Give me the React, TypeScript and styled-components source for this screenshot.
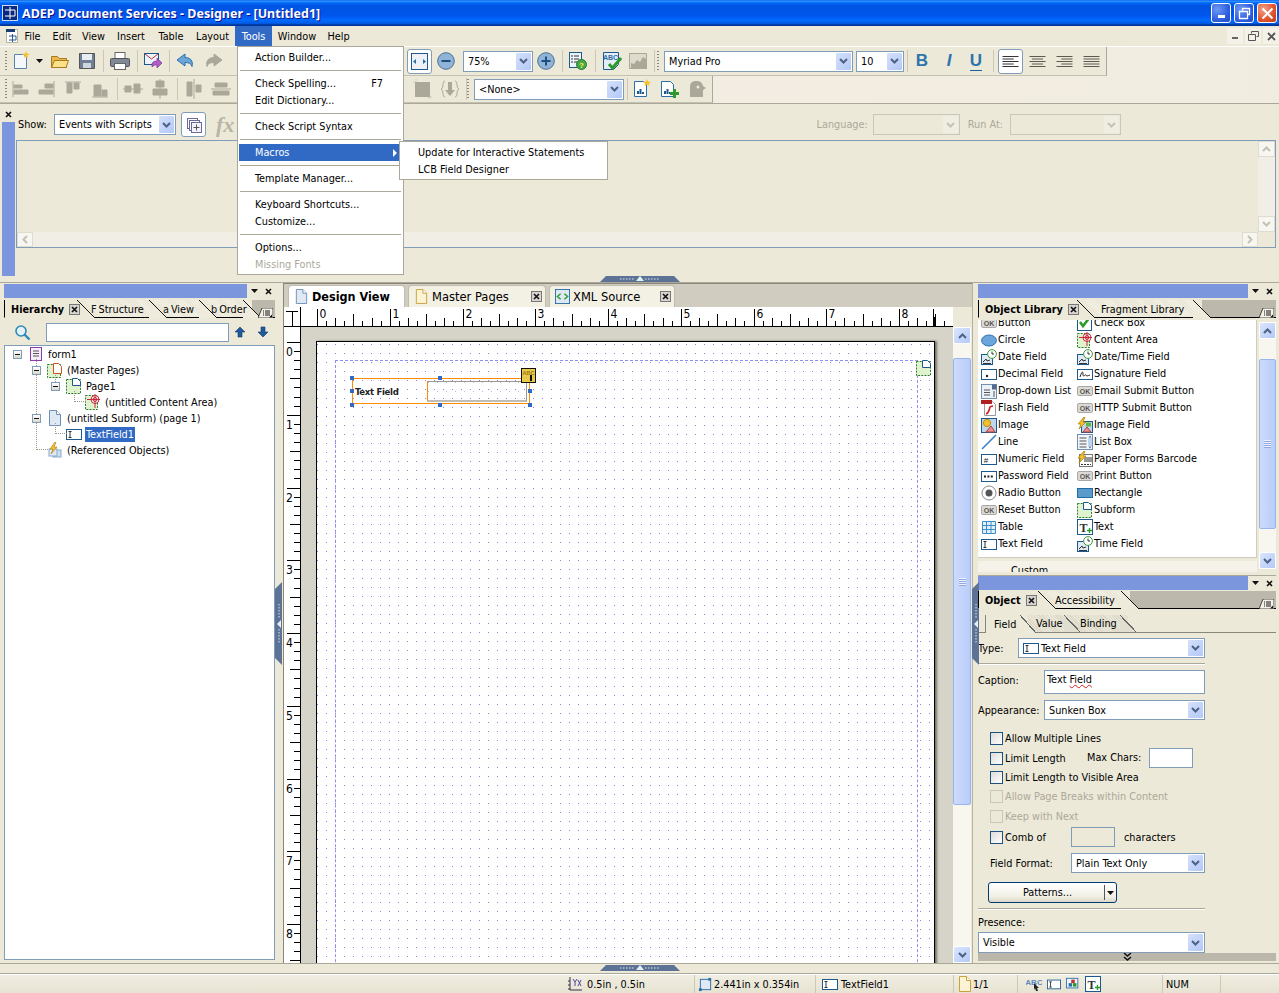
import React from "react";
import styled, { createGlobalStyle } from "styled-components";

const UI = `"DejaVu Sans Condensed", "DejaVu Sans", "Noto Sans", sans-serif`;
const FIELD_LINE = "#7f9db9";
const FACE = "#ece9d8";
const SHADE = "#aca899";

const GlobalStyle = createGlobalStyle`
  html, body { margin: 0; padding: 0; background: ${FACE}; }
  body { font: 10.8px ${UI}; color: #000; }
`;

const Window = styled.div`
  position: relative;
  width: 1279px;
  height: 993px;
  overflow: hidden;
  display: flex;
  flex-direction: column;
  background: ${FACE};
`;

/* title bar */
const TitleBar = styled.div`
  height: 26px;
  flex: none;
  display: flex;
  align-items: center;
  padding: 0 2px;
  background: linear-gradient(180deg, #0058ee 0%, #3593ff 4%, #288eff 6%, #127dff 8%, #036ffc 10%, #0262ee 14%, #0057e5 20%, #0054e3 24%, #0055eb 56%, #005bf5 66%, #026afe 76%, #0062ef 86%, #0052d6 92%, #0040ab 94%, #003092 100%);
`;
const TitleText = styled.div`
  flex: 1;
  margin-left: 4px;
  color: #fff;
  font: bold 12.5px "Noto Sans", sans-serif;
  text-shadow: 1px 1px #0f1089;
  white-space: nowrap;
`;
const WinButton = styled.div<{ $close?: boolean }>`
  width: 18px;
  height: 18px;
  margin-left: 3px;
  border: 1px solid #fff;
  border-radius: 3px;
  display: flex;
  align-items: center;
  justify-content: center;
  background: ${({ $close }) =>
    $close
      ? "radial-gradient(circle at 30% 30%, #f0a38a, #e2512c 60%, #c23a17)"
      : "radial-gradient(circle at 30% 30%, #6f98f3, #2f5fe0 60%, #2148c8)"};
`;

/* menu bar */
const MenuBar = styled.div`
  height: 20px;
  flex: none;
  display: flex;
  align-items: stretch;
  padding-left: 4px;
`;
const MenuLogo = styled.div`
  width: 14px;
  display: flex;
  align-items: center;
`;
const MenuItem = styled.div<{ $open?: boolean; $w: number }>`
  width: ${({ $w }) => $w}px;
  display: flex;
  align-items: center;
  justify-content: center;
  background: ${({ $open }) => ($open ? "#316ac5" : "transparent")};
  color: ${({ $open }) => ($open ? "#fff" : "#000")};
`;
const MdiControls = styled.div`
  margin-left: auto;
  display: flex;
  align-items: center;
  gap: 2px;
`;
const MdiButton = styled.div`
  width: 16px;
  height: 16px;
  background: #f4f2e8;
  display: flex;
  align-items: center;
  justify-content: center;
`;

/* toolbars */
const ToolArea = styled.div`
  flex: none;
  border-top: 1px solid #fff;
  background: linear-gradient(90deg, #f4ece4, #f1ece0);
  border-bottom: 1px solid ${SHADE};
`;
const ToolRow = styled.div<{ $w: number; $h: number }>`
  width: ${({ $w }) => $w}px;
  height: ${({ $h }) => $h}px;
  display: flex;
  align-items: center;
  padding-left: 5px;
  box-sizing: border-box;
  background: ${FACE};
  border-right: 1px solid ${SHADE};
  border-bottom: 1px solid #c5c1b0;
`;
const Slot = styled.div<{ $w: number }>`
  width: ${({ $w }) => $w}px;
  flex: none;
  display: flex;
  align-items: center;
  justify-content: center;
`;
const Grip = styled.div<{ $mr?: number }>`
  width: 2px;
  height: 21px;
  flex: none;
  margin-right: ${({ $mr }) => $mr ?? 2}px;
  background: repeating-linear-gradient(180deg, #8b8778 0 1px, transparent 1px 3px);
`;
const ToolSep = styled.div<{ $w?: number }>`
  width: ${({ $w }) => $w ?? 6}px;
  flex: none;
  height: 22px;
  position: relative;
  &::after {
    content: "";
    position: absolute;
    left: 50%;
    top: 0;
    bottom: 0;
    width: 1px;
    background: #cbc7b4;
  }
`;
const ActiveTool = styled.div`
  width: 25px;
  height: 25px;
  flex: none;
  box-sizing: border-box;
  border: 1px solid ${FIELD_LINE};
  border-radius: 3px;
  background: #fff;
  display: flex;
  align-items: center;
  justify-content: center;
`;
const FormatLetter = styled.span<{ $italic?: boolean; $under?: boolean }>`
  font: ${({ $italic }) => ($italic ? "italic" : "normal")} bold 17px "Liberation Sans", sans-serif;
  color: #2c74ad;
  border-bottom: ${({ $under }) => ($under ? "1px solid #1b5e92" : "none")};
  line-height: 18px;
`;

/* combos */
const ComboBox = styled.div<{ $w?: number; $h?: number; $off?: boolean }>`
  width: ${({ $w }) => ($w ? `${$w}px` : "100%")};
  height: ${({ $h }) => $h ?? 21}px;
  flex: none;
  box-sizing: border-box;
  border: 1px solid ${({ $off }) => ($off ? "#c9c7ba" : FIELD_LINE)};
  background: ${({ $off }) => ($off ? FACE : "#fff")};
  display: flex;
  align-items: center;
  padding: 1px;
`;
const ComboText = styled.div`
  flex: 1;
  padding-left: 3px;
  display: flex;
  align-items: center;
  gap: 2px;
  white-space: nowrap;
  overflow: hidden;
`;
const ComboArrow = styled.div<{ $off?: boolean }>`
  width: 15px;
  align-self: stretch;
  flex: none;
  border-radius: 1px;
  background: ${({ $off }) => ($off ? "#f0eee3" : "linear-gradient(135deg, #d5e1fb, #b2c8f8)")};
  display: flex;
  align-items: center;
  justify-content: center;
`;

/* script editor */
const ScriptPanel = styled.div`
  height: 172px;
  flex: none;
  display: grid;
  grid-template-columns: 16px 1fr;
`;
const ScriptRail = styled.div`
  display: flex;
  flex-direction: column;
  padding-left: 2px;
`;
const RailClose = styled.div`
  height: 18px;
  padding: 4px 0 0 3px;
  box-sizing: border-box;
`;
const RailStrip = styled.div`
  flex: 1;
  width: 13px;
  background: #7b96dc;
`;
const ScriptBody = styled.div`
  display: flex;
  flex-direction: column;
  min-width: 0;
`;
const ShowRow = styled.div`
  height: 36px;
  flex: none;
  box-sizing: border-box;
  padding: 8px 158px 3px 2px;
  display: flex;
  align-items: center;
`;
const ShowLabel = styled.span`
  width: 36px;
  flex: none;
`;
const LangGroup = styled.div`
  margin-left: auto;
  display: flex;
  align-items: center;
`;
const DimLabel = styled.span<{ $ml?: number; $mr?: number }>`
  color: #aca899;
  margin-left: ${({ $ml }) => $ml ?? 0}px;
  margin-right: ${({ $mr }) => $mr ?? 0}px;
`;
const ScriptBox = styled.div`
  width: 1260px;
  height: 108px;
  box-sizing: border-box;
  border: 1px solid ${FIELD_LINE};
  display: grid;
  grid-template-columns: 1fr 17px;
  grid-template-rows: 1fr 15px;
  background: ${FACE};
`;
const ScriptGutter = styled.div`
  background: #f1efe5;
  display: flex;
  align-items: stretch;
  justify-content: space-between;
`;
const ScrollEnd = styled.div`
  width: 16px;
  background: #f7f6f0;
  border: 1px solid #dfdccd;
  box-sizing: border-box;
  display: flex;
  align-items: center;
  justify-content: center;
`;
const ScriptRight = styled(ScriptGutter)`
  flex-direction: column;
`;
const ScrollEndV = styled(ScrollEnd)`
  width: auto;
  height: 16px;
`;

const HSplit = styled.div<{ $h: number; $edge?: boolean }>`
  height: ${({ $h }) => $h}px;
  flex: none;
  box-sizing: border-box;
  border-top: ${({ $edge }) => ($edge ? `1px solid ${SHADE}` : "0")};
  border-bottom: 1px solid ${SHADE};
`;

/* workspace */
const Workspace = styled.div`
  height: 680px;
  flex: none;
  display: grid;
  grid-template-columns: 283px 689px 307px;
  grid-template-rows: minmax(0, 1fr);
`;
const LeftDock = styled.div`
  padding: 1px 5px 3px 4px;
  width: 280px;
  box-sizing: border-box;
  display: flex;
  flex-direction: column;
  min-height: 0;
`;
const CaptionStrip = styled.div`
  height: 14px;
  flex: none;
  display: flex;
  align-items: center;
`;
const CaptionFill = styled.div`
  flex: 1;
  align-self: stretch;
  background: #7b96dc;
`;
const CaptionTools = styled.div`
  width: 27px;
  flex: none;
  display: flex;
  align-items: center;
  justify-content: space-around;
  padding-left: 1px;
`;
const TabStrip = styled.div<{ $mt?: number }>`
  height: 18px;
  flex: none;
  margin-top: ${({ $mt }) => $mt ?? 2}px;
  display: flex;
  align-items: stretch;
  background: #bdb8ac;
  position: relative;
`;
const DockTab = styled.div<{ $active?: boolean; $w: number; $pl?: number; $z?: number }>`
  width: ${({ $w }) => $w}px;
  flex: none;
  box-sizing: border-box;
  position: relative;
  display: flex;
  align-items: center;
  gap: 5px;
  padding-left: ${({ $pl }) => $pl ?? 6}px;
  padding-top: 1px;
  background: ${({ $active }) =>
    $active
      ? FACE
      : "repeating-linear-gradient(45deg, #f3f0e4 0 1px, #e9e5d6 1px 2px)"};
  border-bottom: 1px solid ${({ $active }) => ($active ? FACE : "#000")};
  border-left: ${({ $active }) => ($active ? "1px solid #000" : "0")};
  font-weight: ${({ $active }) => ($active ? "bold" : "normal")};
  z-index: ${({ $active, $z }) => ($active ? 6 : $z ?? 1)};
  white-space: nowrap;
  &::after {
    content: "";
    position: absolute;
    top: 0;
    bottom: -1px;
    right: -9px;
    width: 18px;
    background: linear-gradient(
      to top right,
      ${({ $active }) => ($active ? FACE : "#eeeadc")} calc(50% - 0.6px),
      #111 calc(50% - 0.6px),
      #111 calc(50% + 0.6px),
      transparent calc(50% + 0.6px)
    );
  }
`;
const TabLabel = styled.span`
  position: relative;
  z-index: 1;
`;
const TabTail = styled.div`
  flex: 1;
  border-bottom: 1px solid #000;
`;
const TabMenu = styled.div`
  position: absolute;
  right: 2px;
  bottom: 0;
  display: flex;
  z-index: 7;
`;
const CloseBox = styled.span`
  width: 9px;
  height: 9px;
  border: 1px solid #777;
  background: #d8d4d0;
  display: inline-flex;
  align-items: center;
  justify-content: center;
  flex: none;
  position: relative;
  z-index: 1;
`;
const ClippedIcon = styled.span`
  margin-right: -3px;
  color: #111;
  position: relative;
  z-index: 1;
`;
const SearchRow = styled.div`
  height: 27px;
  flex: none;
  display: flex;
  align-items: center;
  box-sizing: border-box;
  padding-top: 1px;
`;
const SearchInput = styled.div`
  width: 183px;
  height: 19px;
  flex: none;
  box-sizing: border-box;
  border: 1px solid ${FIELD_LINE};
  background: #fff;
`;
const TreeBox = styled.div`
  flex: 1;
  box-sizing: border-box;
  border: 1px solid ${FIELD_LINE};
  background: #fff;
`;
const TreeLine = styled.div<{ $depth: number }>`
  height: 16px;
  position: relative;
  display: flex;
  align-items: center;
  padding-left: ${({ $depth }) => 8 + $depth * 19}px;
  white-space: nowrap;
`;
const TreeStem = styled.span<{ $left: number; $up: number; $reach: number }>`
  position: absolute;
  left: ${({ $left }) => $left}px;
  bottom: 8px;
  height: ${({ $up }) => $up}px;
  width: ${({ $reach }) => $reach}px;
  border-left: 1px dotted #9a9684;
  border-bottom: 1px dotted #9a9684;
`;
const Expander = styled.span`
  width: 7px;
  height: 7px;
  flex: none;
  border: 1px solid #7f9db9;
  background: linear-gradient(#fff, #dcd8c8);
  display: flex;
  align-items: center;
  justify-content: center;
  position: relative;
  z-index: 1;
  margin-right: 6px;
`;
const ExpanderGap = styled.span`
  width: 15px;
  flex: none;
`;
const TreeLabel = styled.span<{ $sel?: boolean }>`
  margin-left: 3px;
  padding: 1px 1px;
  background: ${({ $sel }) => ($sel ? "#316ac5" : "transparent")};
  color: ${({ $sel }) => ($sel ? "#fff" : "#000")};
`;

/* centre: design view */
const CenterDock = styled.div`
  display: flex;
  flex-direction: column;
  min-width: 0;
  min-height: 0;
  overflow: hidden;
  border-left: 1px solid #8a877a;
`;
const DocTabs = styled.div`
  height: 24px;
  flex: none;
  box-sizing: border-box;
  display: flex;
  align-items: flex-end;
  padding-left: 4px;
  gap: 3px;
  background: #d0ccc0;
  border-top: 1px solid #8a877a;
`;
const DocTab = styled.div<{ $active?: boolean; $w: number }>`
  width: ${({ $w }) => $w}px;
  height: 22px;
  box-sizing: border-box;
  display: flex;
  align-items: center;
  padding: 0 3px 0 5px;
  gap: 3px;
  font-size: ${({ $active }) => ($active ? 12.5 : 12.8)}px;
  font-weight: ${({ $active }) => ($active ? "bold" : "normal")};
  border: 1px solid #c0bcae;
  border-bottom: 0;
  border-radius: 4px 4px 0 0;
  background: ${({ $active }) => ($active ? "#fff" : "#f3f0e4")};
  white-space: nowrap;
`;
const DocTabClose = styled(CloseBox)`
  margin-left: auto;
`;
const CanvasFrame = styled.div`
  flex: 1;
  min-height: 0;
  display: grid;
  grid-template-columns: 17px 652px 18px;
  grid-template-rows: 20px minmax(0, 1fr);
`;
const RulerCorner = styled.div`
  background: #fff;
  border-right: 1px solid #000;
  border-bottom: 1px solid #000;
`;
const RulerTop = styled.div`
  background: #fff;
  border-bottom: 1px solid #000;
  overflow: hidden;
`;
const Blank = styled.div`
  background: ${FACE};
`;
const RulerSide = styled.div`
  background: #fff;
  border-right: 1px solid #000;
  overflow: hidden;
`;
const RulerSvg = styled.svg`
  display: block;
`;
const Desk = styled.div`
  background: #d6d3c8;
  overflow: hidden;
  padding: 14px 0 0 15px;
  min-height: 0;
`;
const Page = styled.div`
  position: relative;
  width: 619px;
  height: 680px;
  box-sizing: border-box;
  border: 1.5px solid #000;
  border-bottom: 0;
  box-shadow: 2px 0 2px #77756c;
  background-color: #fff;
  background-image: radial-gradient(circle at 0.5px 0.5px, #8484ea 0.65px, transparent 0.75px);
  background-size: 9px 9px;
  background-position: 0 2px;
`;
const PageMargin = styled.div`
  position: absolute;
  left: 18px;
  top: 18px;
  width: 581px;
  height: 700px;
  border: 1px dashed #8f8ff0;
`;
const MarginTag = styled.div`
  position: absolute;
  left: 599px;
  top: 18px;
`;
const FieldObject = styled.div`
  position: absolute;
  left: 35px;
  top: 36px;
  width: 178px;
  height: 26px;
  box-sizing: border-box;
  border: 1px solid #ff8c00;
  display: flex;
  align-items: center;
  padding-left: 2px;
`;
const FieldCaption = styled.span`
  width: 72px;
  font-size: 9.5px;
  font-weight: bold;
  letter-spacing: -0.3px;
  color: #222;
  flex: none;
`;
const FieldWell = styled.div`
  width: 100px;
  height: 21px;
  box-sizing: border-box;
  border: 1px solid #9b9890;
  border-bottom: 2px solid #c0bdb5;
  border-left: 1px solid #ff8c00;
  background-image: radial-gradient(circle at 0.5px 0.5px, #bcbcd8 0.5px, transparent 0.7px);
  background-size: 9px 9px;
`;
const Handle = styled.span<{ $x: number; $y: number }>`
  position: absolute;
  left: ${({ $x }) => $x}px;
  top: ${({ $y }) => $y}px;
  width: 4px;
  height: 4px;
  background: #316ac5;
`;
const WarnTag = styled.div`
  position: absolute;
  left: 204px;
  top: 26px;
  width: 15px;
  height: 15px;
  box-sizing: border-box;
  border: 1px solid #111;
  background: #e8c94a;
  display: flex;
  align-items: center;
  justify-content: center;
`;
const ScrollTrack = styled.div`
  background: #f7f6ef;
  display: flex;
  flex-direction: column;
  align-items: stretch;
  overflow: hidden;
`;
const ListScroll = styled(ScrollTrack)`
  margin: 2px 0 3px;
`;
const ScrollBtn = styled.div`
  height: 17px;
  flex: none;
  border: 1px solid #fff;
  box-sizing: border-box;
  border-radius: 2px;
  background: linear-gradient(135deg, #dbe6fd, #b4c9f8);
  display: flex;
  align-items: center;
  justify-content: center;
`;
const ScrollThumb = styled.div<{ $mt: number; $h: number }>`
  margin-top: ${({ $mt }) => $mt}px;
  height: ${({ $h }) => $h}px;
  flex: none;
  border: 1px solid #9ab4ec;
  border-radius: 2px;
  box-sizing: border-box;
  background: linear-gradient(90deg, #cddafc, #b9cdfa);
  display: flex;
  align-items: center;
  justify-content: center;
`;
const ThumbGrip = styled.div`
  width: 7px;
  height: 8px;
  background: repeating-linear-gradient(180deg, #eef3ff 0 1px, #8ea9e2 1px 2px);
`;
const ScrollFill = styled.div`
  flex: 1;
`;

/* right docks */
const RightDock = styled.div`
  padding: 1px 3px 3px 5px;
  display: flex;
  flex-direction: column;
  min-width: 0;
  min-height: 0;
  border-left: 1px solid #b5b19f;
`;
const LibBody = styled.div`
  height: 252px;
  margin-top: 2px;
  flex: none;
  display: grid;
  grid-template-columns: 279px 17px;
  gap: 2px;
`;
const LibColumn = styled.div`
  display: flex;
  flex-direction: column;
  min-height: 0;
`;
const LibList = styled.div`
  height: 238px;
  flex: none;
  box-sizing: border-box;
  background: #fff;
  border-bottom: 1px solid #cfccbe;
  border-right: 1px solid #cfccbe;
  padding-left: 3px;
  overflow: hidden;
`;
const LibGrid = styled.div`
  margin-top: -6px;
  display: grid;
  grid-template-columns: 96px 1fr;
  grid-auto-rows: 17px;
`;
const LibItem = styled.div`
  display: flex;
  align-items: center;
  gap: 1px;
  white-space: nowrap;
`;
const LibFold = styled.div`
  margin-top: 3px;
  height: 11px;
  overflow: hidden;
  background: #f5f3e9;
  padding-left: 33px;
  line-height: 20px;
  flex: none;
`;
const DockRule = styled.div`
  height: 3px;
  flex: none;
  border-bottom: 1px solid ${SHADE};
`;
const SubTabs = styled.div`
  margin-top: 6px;
  height: 18px;
  flex: none;
  box-sizing: border-box;
  display: flex;
  padding-left: 7px;
  border-bottom: 1px solid #8a877a;
`;
const SubTab = styled.div<{ $active?: boolean; $w: number; $z: number }>`
  width: ${({ $w }) => $w}px;
  flex: none;
  position: relative;
  box-sizing: border-box;
  display: flex;
  align-items: center;
  padding-left: 8px;
  background: ${({ $active }) =>
    $active ? FACE : "repeating-linear-gradient(45deg, #ebe7d9 0 1px, #dbd7c6 1px 2px)"};
  border-left: ${({ $active }) => ($active ? "1px solid #8a877a" : "0")};
  margin-bottom: ${({ $active }) => ($active ? -1 : 0)}px;
  z-index: ${({ $z }) => $z};
  &::after {
    content: "";
    position: absolute;
    top: 0;
    bottom: 0;
    right: -8px;
    width: 16px;
    background: linear-gradient(
      to top right,
      ${({ $active }) => ($active ? FACE : "#e2decf")} calc(50% - 0.6px),
      #666 calc(50% - 0.6px),
      #666 calc(50% + 0.6px),
      transparent calc(50% + 0.6px)
    );
  }
`;
const FormWrap = styled.div`
  flex: 1;
  min-height: 0;
  display: flex;
  flex-direction: column;
`;
const FormRow = styled.div<{ $mt: number; $h: number; $pl?: number }>`
  margin-top: ${({ $mt }) => $mt}px;
  height: ${({ $h }) => $h}px;
  flex: none;
  width: 227px;
  box-sizing: border-box;
  padding-left: ${({ $pl }) => $pl ?? 0}px;
  display: flex;
  align-items: center;
  white-space: nowrap;
`;
const FormLabel = styled.span<{ $w: number; $lift?: number }>`
  width: ${({ $w }) => $w}px;
  flex: none;
  display: flex;
  align-items: center;
  margin-top: ${({ $lift }) => -($lift ?? 0)}px;
`;
const FormRule = styled.div<{ $mt: number }>`
  margin-top: ${({ $mt }) => $mt}px;
  width: 227px;
  height: 1px;
  flex: none;
  background: ${SHADE};
  box-shadow: 0 1px #fff;
`;
const TextBox = styled.div<{ $w: number; $h: number; $off?: boolean; $ml?: number }>`
  width: ${({ $w }) => $w}px;
  height: ${({ $h }) => $h}px;
  margin-left: ${({ $ml }) => $ml ?? 0}px;
  flex: none;
  box-sizing: border-box;
  border: 1px solid ${FIELD_LINE};
  background: ${({ $off }) => ($off ? FACE : "#fff")};
  padding: 2px;
`;
const Wavy = styled.span`
  text-decoration: underline wavy #e02020 1px;
  text-underline-offset: 1px;
`;
const CheckBox = styled.span<{ $off?: boolean }>`
  width: 11px;
  height: 11px;
  flex: none;
  margin-right: 2px;
  border: 1px solid ${({ $off }) => ($off ? "#c9c7ba" : "#1c5180")};
  background: ${({ $off }) => ($off ? FACE : "linear-gradient(135deg, #dcdcd7, #fff)")};
`;
const CheckText = styled.span<{ $off?: boolean }>`
  color: ${({ $off }) => ($off ? SHADE : "#000")};
`;
const SplitButton = styled.div`
  width: 129px;
  height: 21px;
  box-sizing: border-box;
  border: 1px solid #003c74;
  border-radius: 3px;
  background: linear-gradient(#fff, #f2f0e6 70%, #dcd8c8);
  display: flex;
  align-items: center;
`;
const SplitLabel = styled.div`
  flex: 1;
  text-align: center;
  padding-left: 2px;
`;
const SplitArrow = styled.div`
  width: 11px;
  height: 15px;
  border-left: 1px solid #555;
  display: flex;
  align-items: center;
  justify-content: center;
`;
const MoreBar = styled.div`
  height: 8px;
  flex: none;
  background: #bcb7ab;
  display: flex;
  align-items: center;
  justify-content: center;
`;

/* status bar */
const StatusBar = styled.div`
  height: 19px;
  flex: none;
  box-sizing: border-box;
  display: flex;
  align-items: stretch;
  border-top: 1px solid #fff;
  background: linear-gradient(#f0eee2, #e7e3d2);
`;
const StatusPane = styled.div<{ $w: number; $bare?: boolean; $gap?: number }>`
  width: ${({ $w }) => $w}px;
  flex: none;
  box-sizing: border-box;
  display: flex;
  align-items: center;
  gap: ${({ $gap }) => $gap ?? 4}px;
  padding-left: 3px;
  white-space: nowrap;
  border-left: ${({ $bare }) => ($bare ? "0" : "1px solid #cdc9b7")};
`;

/* menus and splitter tabs */
const Popup = styled.div<{ $l: number; $t: number; $w: number; $pt?: number }>`
  position: absolute;
  left: ${({ $l }) => $l}px;
  top: ${({ $t }) => $t}px;
  width: ${({ $w }) => $w}px;
  box-sizing: border-box;
  background: #fff;
  border: 1px solid ${SHADE};
  padding: ${({ $pt }) => $pt ?? 1}px 1px 1px;
  z-index: 10;
`;
const PopItem = styled.div<{ $hot?: boolean; $off?: boolean; $indent: number }>`
  height: 17px;
  display: flex;
  align-items: center;
  padding-left: ${({ $indent }) => $indent}px;
  background: ${({ $hot }) => ($hot ? "#316ac5" : "transparent")};
  color: ${({ $hot, $off }) => ($hot ? "#fff" : $off ? SHADE : "#000")};
  white-space: nowrap;
`;
const PopKey = styled.span`
  margin-left: auto;
  margin-right: 19px;
`;
const PopArrow = styled.span`
  margin-left: auto;
  margin-right: 5px;
  width: 0;
  height: 0;
  border-left: 4px solid #fff;
  border-top: 4px solid transparent;
  border-bottom: 4px solid transparent;
`;
const PopSep = styled.div`
  height: 1px;
  margin: 4px 1px;
  background: ${SHADE};
`;
const DockHandle = styled.div<{ $l: number; $t: number }>`
  position: absolute;
  left: ${({ $l }) => $l}px;
  top: ${({ $t }) => $t}px;
  width: 80px;
  height: 6px;
  background: #5d7396;
  clip-path: polygon(6px 0, 74px 0, 80px 100%, 0 100%);
  display: flex;
  align-items: center;
  justify-content: center;
  z-index: 3;
`;
const SideHandle = styled.div<{ $l: number }>`
  position: absolute;
  left: ${({ $l }) => $l}px;
  top: 582px;
  width: 7px;
  height: 83px;
  background: #5d7396;
  clip-path: polygon(0 7px, 100% 0, 100% 100%, 0 76px);
  display: flex;
  align-items: center;
  justify-content: center;
  z-index: 3;
`;
const FxMark = styled.span`
  font: italic bold 22px "Liberation Serif", serif;
  color: #b9b5a6;
  margin-left: 10px;
`;

/* icons */
const BL = "#1c5a8e";
const GY = "#aca899";
const IconSvg = styled.svg`
  display: block;
  flex: none;
`;
const Svg: React.FC<{ s?: number; v?: number; children: React.ReactNode }> = ({ s = 16, v = 16, children }) => (
  <IconSvg width={s} height={s} viewBox={`0 0 ${v} ${v}`}>
    {children}
  </IconSvg>
);
const Chevron: React.FC<{ up?: boolean; off?: boolean }> = ({ up, off }) => (
  <svg width="9" height="6" viewBox="0 0 9 6">
    <path d={up ? "M1 5l3.500-3.500L8 5" : "M1 1l3.500 3.500L8 1"} fill="none" stroke={off ? "#c4c2b6" : "#4d6185"} strokeWidth="2" />
  </svg>
);
const TinyX = () => (
  <svg width="7" height="7" viewBox="0 0 7 7">
    <path d="M1 1l5 5M6 1L1 6" stroke="#111" strokeWidth="1.6" />
  </svg>
);
const TinyDown = () => (
  <svg width="7" height="4" viewBox="0 0 7 4">
    <path d="M0 0h7L3.500 4z" fill="#111" />
  </svg>
);
const HandleMark = () => (
  <svg width="42" height="6" viewBox="0 0 42 6">
    <path d="M1 3h15M26 3h15" stroke="#dfe6f2" strokeDasharray="1.5 1.5" />
    <path d="M21 0l4 5h-8z" fill="#e8eef8" />
  </svg>
);
const SideMark = () => (
  <svg width="6" height="42" viewBox="0 0 6 42">
    <path d="M3 1v15M3 26v15" stroke="#dfe6f2" strokeDasharray="1.5 1.5" />
    <path d="M1 21l4-4v8z" fill="#e8eef8" />
  </svg>
);
const FieldFrame = () => <rect x=".5" y="3.500" width="15" height="10" fill="#fff" stroke={BL} />;
const OkIcon = () => (
  <Svg>
    <rect x=".5" y="3.500" width="15" height="9" rx="1.500" fill="#dcdad3" stroke="#a8a8a8" />
    <text x="8" y="11" fontSize="7" fontWeight="bold" textAnchor="middle" fill="#555" fontFamily="Liberation Sans">OK</text>
  </Svg>
);
const ClockDoc = () => (
  <Svg>
    <rect x=".5" y="5.500" width="11" height="10" fill="#dfe9f5" stroke={BL} />
    <path d="M2 13l3-3 1 2 3-1M2 14.500h8" stroke="#333" fill="none" />
    <circle cx="11" cy="5" r="4.400" fill="#fff" stroke="#3c9a3c" />
    <path d="M11 2.500V5h2" stroke="#333" fill="none" />
  </Svg>
);
const SubformIcon = () => (
  <Svg>
    <rect x=".5" y="1.500" width="14" height="14" fill="#dff3cf" stroke="#2c7a2c" strokeDasharray="2 1.200" />
    <path d="M6.500.5h5l3 3v4h-8z" fill="#fff" stroke={BL} />
  </Svg>
);
const ContentIcon = () => (
  <Svg>
    <rect x=".5" y="1.500" width="12" height="14" fill="#dff3cf" stroke="#2c7a2c" strokeDasharray="2 1.200" />
    <circle cx="10" cy="5.500" r="4" fill="#fff" stroke="#c82a3a" />
    <circle cx="10" cy="5.500" r="2" fill="none" stroke="#c82a3a" />
    <path d="M2 5.500h13M10 0v14" stroke="#c82a3a" />
  </Svg>
);
const ImageIcon = () => (
  <Svg>
    <rect x=".5" y="1.500" width="15" height="14" fill="#bcd6ee" stroke={BL} />
    <circle cx="6" cy="6" r="3.600" fill="#f6c22c" stroke="#b98a10" />
    <path d="M5 15l5-6 4 6z" fill="#e88f8f" stroke="#b04040" />
  </Svg>
);
const BoltImage = () => (
  <Svg>
    <rect x="4.500" y="4.500" width="11" height="11" fill="#bcd6ee" stroke={BL} />
    <rect x="9" y="5.500" width="5" height="4" fill="#5cb83c" />
    <path d="M6 15l4-5 4 5z" fill="#e88f8f" stroke="#b04040" />
    <path d="M7 0L1 7h3L2 12l7-7H6l2-5z" fill="#f6c22c" stroke="#a87a10" strokeWidth=".7" />
  </Svg>
);
const DocIcon: React.FC<{ fill?: string; line?: string; s?: number }> = ({ fill = "#dfe9f5", line = "#6f8fb5", s = 16 }) => (
  <Svg s={s}>
    <path d="M2.500.5h7l4 4v11h-11z" fill={fill} stroke={line} />
    <path d="M9.500.5v4h4" fill="#fff" stroke={line} />
  </Svg>
);

const icons: Record<string, React.ReactNode> = {
  ok: <OkIcon />,
  check: (
    <Svg>
      <rect x=".5" y="1.500" width="14" height="14" fill="#fff" stroke={BL} />
      <path d="M3 7l3 4 7-9" fill="none" stroke="#2e9a2e" strokeWidth="2.600" />
    </Svg>
  ),
  circle: (
    <Svg>
      <ellipse cx="8" cy="8.500" rx="7.400" ry="5.500" fill="#6ca5dc" stroke="#2c70b0" />
    </Svg>
  ),
  content: <ContentIcon />,
  clock: <ClockDoc />,
  decimal: (
    <Svg>
      <FieldFrame />
      <circle cx="6" cy="10" r="1.200" fill="#222" />
    </Svg>
  ),
  signature: (
    <Svg>
      <FieldFrame />
      <path d="M3 11c2-6 3-6 3-3s1 2 2 1 1 1 2 1 2-1 3-1" stroke="#222" fill="none" />
    </Svg>
  ),
  dropdown: (
    <Svg>
      <rect x=".5" y="1.500" width="15" height="14" fill="#eaf1f8" stroke="#6f8fb5" />
      <rect x="11" y="1.500" width="4.500" height="5" fill="#546a8e" />
      <path d="M3 7h6M3 9.500h6M3 12h6" stroke="#555" />
      <path d="M13 8v6" stroke="#555" />
    </Svg>
  ),
  flash: (
    <Svg>
      <path d="M3.500 1.500h8l3 3v11h-11z" fill="#fff" stroke="#999" />
      <rect x="0" y="0" width="11" height="4" fill="#b02020" />
      <path d="M5 14c3-1 3-4 4-7 .4-1 1.500-1 3-1" stroke="#d41e1e" strokeWidth="1.600" fill="none" />
    </Svg>
  ),
  image: <ImageIcon />,
  bolt: <BoltImage />,
  line: (
    <Svg>
      <path d="M1 15L15 1" stroke="#3c80c8" strokeWidth="1.600" />
    </Svg>
  ),
  list: (
    <Svg>
      <rect x=".5" y=".5" width="15" height="15" fill="#f2f6fb" stroke="#6f8fb5" />
      <path d="M2.500 4h7M2.500 7h7M2.500 10h7M2.500 13h7" stroke="#555" />
      <rect x="11" y="4" width="4" height="8" fill="#bcd4f0" />
      <path d="M13 1.500l1.500 2h-3zM13 14.500l-1.500-2h3z" fill="#546a8e" />
    </Svg>
  ),
  numeric: (
    <Svg>
      <FieldFrame />
      <text x="5" y="12" fontSize="8" fill="#222" textAnchor="middle" fontFamily="Liberation Sans">#</text>
    </Svg>
  ),
  barcode: (
    <Svg>
      <rect x="2.500" y="3.500" width="13" height="12" fill="#fff" stroke="#777" />
      <path d="M8 6v5M10 6v5M12 6v5M14 6v5" stroke="#333" />
      <path d="M4 13.500h10" stroke="#333" strokeDasharray="2 1" />
      <path d="M7 0L1 7h3L2 12l7-7H6l2-5z" fill="#f6c22c" stroke="#a87a10" strokeWidth=".7" />
    </Svg>
  ),
  password: (
    <Svg>
      <FieldFrame />
      <path d="M3 8.500h10" stroke="#222" strokeWidth="2" strokeDasharray="2 1.400" />
    </Svg>
  ),
  radio: (
    <Svg>
      <circle cx="8" cy="8" r="7" fill="#fff" stroke="#888" />
      <circle cx="8" cy="8" r="3.500" fill="#555" />
    </Svg>
  ),
  rect: (
    <Svg>
      <rect x=".5" y="3.500" width="15" height="9" fill="#5b9bcb" stroke="#1e6da8" />
    </Svg>
  ),
  subform: <SubformIcon />,
  table: (
    <Svg>
      <path d="M1.500 2.500h13v12h-13zM1.500 6.500h13M1.500 10.500h13M5.500 2.500v12M10 2.500v12" fill="#e3f0fb" stroke="#3c8cc8" />
    </Svg>
  ),
  text: (
    <Svg>
      <rect x=".5" y=".5" width="15" height="15" fill="#fff" stroke={BL} />
      <text x="6.500" y="12.500" fontSize="12" fontWeight="bold" textAnchor="middle" fill="#333" fontFamily="Liberation Serif">T</text>
      <path d="M12.500 9v5M10 11.500h5" stroke="#2e9a2e" strokeWidth="1.400" />
    </Svg>
  ),
  textfield: (
    <Svg>
      <FieldFrame />
      <path d="M2.500 5.500h3M4 5.500v6M2.500 11.500h3" stroke="#333" fill="none" />
    </Svg>
  ),
};

const NewDoc = () => (
  <Svg s={20} v={20}>
    <path d="M3.500 3.500h9l3 3v11h-12z" fill="#f4f8fc" stroke="#5b82aa" />
    <path d="M15 0l1 2.500 3 .5-2.500 1.500L17 7l-2-1.500L13 7l.5-2.500L11 3l3-.5z" fill="#f6c22c" />
  </Svg>
);
const Folder = () => (
  <Svg s={20} v={20}>
    <path d="M1.500 5.500h6l2 2h7v9h-15z" fill="#e8b84a" stroke="#a87a20" />
    <path d="M1.500 16.500l3-7h14l-2.500 7z" fill="#fde08a" stroke="#a87a20" />
  </Svg>
);
const Floppy = () => (
  <Svg s={20} v={20}>
    <path d="M2.500 2.500h15v15h-15z" fill="#6f7f95" stroke="#555" />
    <rect x="5" y="3" width="10" height="6" fill="#e8edf3" />
    <rect x="6" y="12" width="8" height="5" fill="#d0d6dd" />
  </Svg>
);
const Printer = () => (
  <Svg s={22} v={22}>
    <rect x="6" y="2.500" width="10" height="6" fill="#fff" stroke="#666" />
    <rect x="1.500" y="8.500" width="19" height="8" rx="1" fill="#7f8a96" stroke="#555" />
    <rect x="5.500" y="13.500" width="11" height="6" fill="#fff" stroke="#666" />
  </Svg>
);
const MailBack = () => (
  <Svg s={20} v={20}>
    <rect x="1.500" y="2.500" width="14" height="11" fill="#eef4fb" stroke={BL} />
    <path d="M2 3l6.500 5L15 3" stroke="#c03030" fill="none" />
    <path d="M9 14c0-3 2-4 5-4V7l5 5-5 5v-3c-2 0-3 0-5 2z" fill="#b05cc8" stroke="#7a3296" strokeWidth=".7" />
  </Svg>
);
const Undo: React.FC<{ off?: boolean }> = ({ off }) => (
  <Svg s={20} v={20}>
    <g transform={off ? "translate(20,0) scale(-1,1)" : undefined}>
      <path d="M9 3L1 9l8 6v-3.500c4 0 6 1 7 4 1.500-6-2-9-7-9z" fill={off ? GY : "#6aa6d8"} stroke={off ? GY : "#2c6ea8"} />
    </g>
  </Svg>
);
const FitWidth = () => (
  <Svg s={17} v={17}>
    <rect x=".5" y=".5" width="16" height="16" fill="#eef2f6" stroke={BL} />
    <path d="M2 8.500l3-2.500v5zM15 8.500L12 6v5z" fill="#2c6ea8" />
  </Svg>
);
const Zoomer: React.FC<{ plus?: boolean }> = ({ plus }) => (
  <Svg s={18} v={18}>
    <circle cx="9" cy="9" r="8.300" fill="#8fb4d8" stroke="#4a6f96" />
    <path d={plus ? "M4.500 9h9M9 4.500v9" : "M4.500 9h9"} stroke="#1c4f80" strokeWidth="2" />
  </Svg>
);
const Report = () => (
  <Svg s={20} v={20}>
    <rect x="1.500" y="1.500" width="12" height="15" fill="#eef4fb" stroke={BL} />
    <path d="M3 5h2M6 5h5M3 8h2M6 8h5M3 11h2M6 11h3" stroke="#333" />
    <circle cx="13.500" cy="13.500" r="5" fill="#46a846" stroke="#2c7a2c" />
    <text x="13.500" y="16.500" fontSize="8" fontWeight="bold" textAnchor="middle" fill="#ffe860" fontFamily="Liberation Sans">?</text>
  </Svg>
);
const Spell = () => (
  <Svg s={20} v={20}>
    <path d="M1.500 1.500h15v12l-5 5h-10z" fill="#e4edf6" stroke={BL} />
    <text x="8.500" y="9" fontSize="7" fontWeight="bold" textAnchor="middle" fill="#2c6ea8" fontFamily="Liberation Sans">ABC</text>
    <path d="M7 13l3.500 4L19 7" fill="none" stroke="#2e9a2e" strokeWidth="3" />
  </Svg>
);
const ChartOff = () => (
  <Svg s={20} v={20}>
    <rect x="1.500" y="2.500" width="17" height="15" fill="#dedbcc" stroke={GY} />
    <path d="M3 17V12l3 1 3-4 3 2 3-5 3 2v9z" fill={GY} />
  </Svg>
);
const AlignLines: React.FC<{ mode: "l" | "c" | "r" | "j" }> = ({ mode }) => {
  const rows = [1, 0.7, 1, 0.7, 1];
  return (
    <Svg s={17} v={17}>
      {rows.map((f, i) => {
        const w = mode === "j" ? 16 : 16 * f;
        const x = mode === "l" || mode === "j" ? 0.5 : mode === "r" ? 16.5 - w : 8.5 - w / 2;
        return <path key={i} d={`M${x} ${3.5 + i * 2.5}h${w}`} stroke={mode === "l" ? "#333" : "#5c5a50"} />;
      })}
    </Svg>
  );
};
const GreyAlign: React.FC<{ d: string }> = ({ d }) => (
  <Svg s={20} v={20}>
    <path d={d} fill={GY} stroke={GY} />
  </Svg>
);
const NewPageOff = () => (
  <Svg s={20} v={20}>
    <path d="M2 3h15v15H2z" fill={GY} />
    <path d="M0 3h2M17 18h2M3 0v2M16 18v2" stroke="#c9c6b8" />
  </Svg>
);
const BracesOff = () => (
  <Svg s={20} v={20}>
    <path d="M5 2C2 2 4 9 1 10c3 1 1 8 4 8M15 2c3 0 1 7 4 8-3 1-1 8-4 8" fill="none" stroke={GY} />
    <path d="M8 3h4v8h3l-5 6-5-6h3z" fill={GY} />
  </Svg>
);
const MiniChart: React.FC<{ plus?: boolean; star?: boolean }> = ({ plus, star }) => (
  <Svg s={20} v={20}>
    <path d="M1.500 2.500h9l3 3v12h-12z" fill="#fff" stroke="#2c6ea8" />
    <path d="M4 15v-3h2v3zM6.500 15v-5h2v5zM9 15v-2h2v2z" fill="#1c5a8e" />
    {star && <path d="M14 0l1 2.500 3 .5-2 1.500.5 2.500-2.500-1.500L11.500 7l.5-2.500L10 3l3-.5z" fill="#f6c22c" />}
    {plus && <path d="M14.500 10v9M10 14.500h9" stroke="#2e9a2e" strokeWidth="3" />}
  </Svg>
);
const SafeOff = () => (
  <Svg s={20} v={20}>
    <path d="M3 18V8c0-4 2-6 6-6s6 1 7 5l3 2-3 2v7z" fill={GY} />
    <circle cx="11" cy="8" r="1.500" fill="#ece9d8" />
  </Svg>
);
const Lens = () => (
  <Svg s={17} v={17}>
    <circle cx="7" cy="7" r="5" fill="#e4f1f8" stroke="#2c8ab8" strokeWidth="1.600" />
    <path d="M10.500 10.500l5 5" stroke="#2c8ab8" strokeWidth="2.400" />
  </Svg>
);
const MoveArrow: React.FC<{ down?: boolean }> = ({ down }) => (
  <Svg s={12} v={12}>
    <path d={down ? "M4 1h4v5h3L6 11 1 6h3z" : "M4 11h4V6h3L6 1 1 6h3z"} fill="#1f5a9a" stroke="#123c6c" strokeWidth=".6" />
  </Svg>
);
const TabMenuIcon = () => (
  <svg width="15" height="10" viewBox="0 0 15 10">
    <path d="M0 10L4 0h11v10z" fill="#f4f2e8" stroke="#000" strokeWidth=".7" />
    <path d="M5 3h1M7 3h5M5 5h1M7 5h5M5 7h1M7 7h5" stroke="#111" />
    <path d="M11 9.500l3-3v3z" fill="#111" />
  </svg>
);
const XmlIcon = () => (
  <Svg s={15} v={16}>
    <rect x=".5" y=".5" width="15" height="15" fill="#dfe9f5" stroke="#2c6ea8" />
    <path d="M6 5L2.500 8 6 11M10 5l3.500 3L10 11" stroke="#2e9a2e" fill="none" strokeWidth="1.500" />
  </Svg>
);
const InsertPages = () => (
  <Svg s={18} v={18}>
    <rect x="2.500" y="2.500" width="10" height="10" fill="#fff" stroke="#6a6a9c" />
    <rect x="4.500" y="4.500" width="10" height="10" fill="#fff" stroke="#6a6a9c" />
    <rect x="6.500" y="6.500" width="10" height="10" fill="#f3f2fa" stroke="#6a6a9c" />
    <path d="M11.500 8.500v6M8.500 11.500h6" stroke="#555" />
  </Svg>
);

const ToolbarOne = () => (
  <ToolRow $w={1107} $h={29}>
    <Grip />
    <Slot $w={24}><NewDoc /></Slot>
    <Slot $w={12}><TinyDown /></Slot>
    <Slot $w={2} />
    <Slot $w={26}><Folder /></Slot>
    <Slot $w={27}><Floppy /></Slot>
    <ToolSep />
    <Slot $w={28}><Printer /></Slot>
    <ToolSep />
    <Slot $w={26}><MailBack /></Slot>
    <ToolSep />
    <Slot $w={27}><Undo /></Slot>
    <Slot $w={27}><Undo off /></Slot>
    <Slot $w={181} />
    <ActiveTool><FitWidth /></ActiveTool>
    <Slot $w={28}><Zoomer /></Slot>
    <Slot $w={3} />
    <ComboBox $w={70}><ComboText>75%</ComboText><ComboArrow><Chevron /></ComboArrow></ComboBox>
    <Slot $w={26}><Zoomer plus /></Slot>
    <ToolSep />
    <Slot $w={26}><Report /></Slot>
    <ToolSep $w={8} />
    <Slot $w={26}><Spell /></Slot>
    <Slot $w={26}><ChartOff /></Slot>
    <ToolSep $w={6} />
    <Grip $mr={5} />
    <ComboBox $w={189}><ComboText>Myriad Pro</ComboText><ComboArrow><Chevron /></ComboArrow></ComboBox>
    <Slot $w={3} />
    <ComboBox $w={48}><ComboText>10</ComboText><ComboArrow><Chevron /></ComboArrow></ComboBox>
    <ToolSep $w={6} />
    <Slot $w={24}><FormatLetter>B</FormatLetter></Slot>
    <Slot $w={30}><FormatLetter $italic>I</FormatLetter></Slot>
    <Slot $w={24}><FormatLetter $under>U</FormatLetter></Slot>
    <ToolSep $w={10} />
    <ActiveTool><AlignLines mode="l" /></ActiveTool>
    <Slot $w={28}><AlignLines mode="c" /></Slot>
    <Slot $w={26}><AlignLines mode="r" /></Slot>
    <Slot $w={28}><AlignLines mode="j" /></Slot>
  </ToolRow>
);

const ToolbarTwo = () => (
  <ToolRow $w={713} $h={27}>
    <Grip />
    <Slot $w={24}><GreyAlign d="M2 2v16M3 6h8v3H3zM3 11h14v4H3z" /></Slot>
    <Slot $w={26}><GreyAlign d="M18 2v16M9 5h8v4H9zM3 11h14v4H3z" /></Slot>
    <Slot $w={28}><GreyAlign d="M2 3h16M4 4h5v10H4zM11 4h5v6h-5z" /></Slot>
    <Slot $w={26}><GreyAlign d="M2 18h16M4 6h7v11H4zM12 11h5v6h-5z" /></Slot>
    <ToolSep $w={7} />
    <Slot $w={26}><GreyAlign d="M2 7h6v6H2zM11 5h6v9h-6zM0 10h20" /></Slot>
    <Slot $w={28}><GreyAlign d="M6 2h8v6H6zM3 10h14v6H3zM10 0v20" /></Slot>
    <ToolSep />
    <Slot $w={27}><GreyAlign d="M3 3h5v14H3zM12 6h5v7h-5zM10 0v20" /></Slot>
    <Slot $w={28}><GreyAlign d="M4 4h12v4H4zM2 12h16v4H2zM0 10h20" /></Slot>
    <ToolSep />
    <Slot $w={168} />
    <Slot $w={27}><NewPageOff /></Slot>
    <Slot $w={28}><BracesOff /></Slot>
    <ToolSep $w={3} />
    <Grip $mr={5} />
    <ComboBox $w={150}><ComboText>&lt;None&gt;</ComboText><ComboArrow><Chevron /></ComboArrow></ComboBox>
    <ToolSep />
    <Slot $w={26}><MiniChart star /></Slot>
    <Slot $w={28}><MiniChart plus /></Slot>
    <Slot $w={26}><SafeOff /></Slot>
  </ToolRow>
);

const Script = () => (
  <ScriptPanel>
    <ScriptRail>
      <RailClose><TinyX /></RailClose>
      <RailStrip />
    </ScriptRail>
    <ScriptBody>
      <ShowRow>
        <ShowLabel>Show:</ShowLabel>
        <ComboBox $w={122}>
          <ComboText>Events with Scripts</ComboText>
          <ComboArrow><Chevron /></ComboArrow>
        </ComboBox>
        <Slot $w={5} />
        <ActiveTool><InsertPages /></ActiveTool>
        <FxMark>fx</FxMark>
        <LangGroup>
          <DimLabel $mr={5}>Language:</DimLabel>
          <ComboBox $w={87} $off>
            <ComboText />
            <ComboArrow $off><Chevron off /></ComboArrow>
          </ComboBox>
          <DimLabel $ml={8} $mr={7}>Run At:</DimLabel>
          <ComboBox $w={111} $off>
            <ComboText />
            <ComboArrow $off><Chevron off /></ComboArrow>
          </ComboBox>
        </LangGroup>
      </ShowRow>
      <ScriptBox>
        <div />
        <ScriptRight>
          <ScrollEndV><Chevron up off /></ScrollEndV>
          <ScrollEndV><Chevron off /></ScrollEndV>
        </ScriptRight>
        <ScriptGutter>
          <ScrollEnd>
            <svg width="6" height="9" viewBox="0 0 6 9"><path d="M5 1L1.500 4.500 5 8" fill="none" stroke="#c4c2b6" strokeWidth="2" /></svg>
          </ScrollEnd>
          <ScrollEnd>
            <svg width="6" height="9" viewBox="0 0 6 9"><path d="M1 1l3.500 3.500L1 8" fill="none" stroke="#c4c2b6" strokeWidth="2" /></svg>
          </ScrollEnd>
        </ScriptGutter>
        <div />
      </ScriptBox>
    </ScriptBody>
  </ScriptPanel>
);

const Caption = () => (
  <CaptionStrip>
    <CaptionFill />
    <CaptionTools>
      <TinyDown />
      <TinyX />
    </CaptionTools>
  </CaptionStrip>
);

type TreeRow = {
  label: string;
  depth: number;
  exp?: boolean;
  sel?: boolean;
  stem?: { left: number; up: number; reach: number };
  icon: React.ReactNode;
};

const treeRows: TreeRow[] = [
  { label: "form1", depth: 0, exp: true, icon: <Svg><rect x="2.500" y="1.500" width="11" height="13" fill="#f4effa" stroke="#8c3ca8" /><path d="M5 5h6M5 7.500h6M5 10h6" stroke="#555" /></Svg> },
  { label: "(Master Pages)", depth: 1, exp: true, stem: { left: 31, up: 10, reach: 0 }, icon: <Svg><rect x=".5" y="2.500" width="13" height="13" fill="#dff3cf" stroke="#2c7a2c" strokeDasharray="2 1.200" /><path d="M6.500 1.500h5l3 3v7h-8z" fill="#fff" stroke="#c8541c" /></Svg> },
  { label: "Page1", depth: 2, exp: true, stem: { left: 50, up: 10, reach: 0 }, icon: <SubformIcon /> },
  { label: "(untitled Content Area)", depth: 3, stem: { left: 69, up: 10, reach: 11 }, icon: <ContentIcon /> },
  { label: "(untitled Subform) (page 1)", depth: 1, exp: true, stem: { left: 31, up: 48, reach: 0 }, icon: <DocIcon /> },
  { label: "TextField1", depth: 2, sel: true, stem: { left: 50, up: 10, reach: 11 }, icon: icons.textfield },
  { label: "(Referenced Objects)", depth: 1, stem: { left: 31, up: 32, reach: 11 }, icon: <Svg><rect x="6" y="8" width="8" height="7" fill="#cfe0f4" stroke="#8aa8cc" /><rect x="2" y="7" width="8" height="7" fill="#dfe9f5" stroke="#8aa8cc" /><path d="M8 0L3 7h3L4 12l6-7H7l2-5z" fill="#f6c22c" stroke="#a87a10" strokeWidth=".6" /></Svg> },
];

const LeftPanel = () => (
  <LeftDock>
    <Caption />
    <TabStrip>
      <DockTab $active $w={82}><TabLabel>Hierarchy</TabLabel><CloseBox><TinyX /></CloseBox></DockTab>
      <DockTab $w={72} $pl={5} $z={4}><ClippedIcon>F</ClippedIcon><TabLabel>Structure</TabLabel></DockTab>
      <DockTab $w={50} $pl={5} $z={3}><ClippedIcon>a</ClippedIcon><TabLabel>View</TabLabel></DockTab>
      <DockTab $w={44} $pl={3} $z={2}><ClippedIcon>b</ClippedIcon><TabLabel>Order</TabLabel></DockTab>
      <TabTail />
      <TabMenu><TabMenuIcon /></TabMenu>
    </TabStrip>
    <SearchRow>
      <Slot $w={36}><Lens /></Slot>
      <Slot $w={6} />
      <SearchInput />
      <Slot $w={21}><MoveArrow /></Slot>
      <Slot $w={25}><MoveArrow down /></Slot>
    </SearchRow>
    <TreeBox>
      {treeRows.map((r, i) => (
        <TreeLine key={i} $depth={r.depth}>
          {r.stem && <TreeStem $left={r.stem.left} $up={r.stem.up} $reach={r.stem.reach} />}
          {r.exp ? (
            <Expander><svg width="5" height="1"><rect width="5" height="1" fill="#111" /></svg></Expander>
          ) : (
            <ExpanderGap />
          )}
          {r.icon}
          <TreeLabel $sel={r.sel}>{r.label}</TreeLabel>
        </TreeLine>
      ))}
    </TreeBox>
  </LeftDock>
);

const INCH = 72.75;
const Ruler: React.FC<{ vertical?: boolean; origin: number; length: number; labels: number }> = ({ vertical, origin, length, labels }) => {
  const ticks: React.ReactNode[] = [];
  const unit = INCH / 8;
  for (let i = 0; i * unit + origin < length; i++) {
    const p = Math.round(origin + i * unit) + 0.5;
    const major = i % 8 === 0;
    const half = i % 4 === 0;
    const quarter = i % 2 === 0;
    const size = vertical
      ? major ? 13 : half ? 10 : 6
      : major ? 17 : half ? 12 : quarter ? 8 : 5;
    ticks.push(
      vertical ? (
        <path key={i} d={`M${16 - size} ${p}H16`} stroke="#000" />
      ) : (
        <path key={i} d={`M${p} ${19 - size}V19`} stroke="#000" />
      )
    );
    if (major && i / 8 <= labels) {
      ticks.push(
        <text
          key={`n${i}`}
          x={vertical ? 2 : p + 2}
          y={vertical ? p + 13 : 11}
          fontSize="12"
          fontFamily="DejaVu Sans Condensed, DejaVu Sans, sans-serif"
          fill="#000"
        >
          {i / 8}
        </text>
      );
    }
  }
  return vertical ? (
    <RulerSvg width="16" height={length}>{ticks}</RulerSvg>
  ) : (
    <RulerSvg width={length} height="19">
      {ticks}
      <path d="M632.5 2V19" stroke="#000" />
      <path d="M633.5 10V19" stroke="#000" />
    </RulerSvg>
  );
};

const handles: [number, number][] = [
  [33, 34], [121, 34], [211, 34], [33, 47], [211, 47], [33, 61], [121, 61], [211, 61],
];

const Center = () => (
  <CenterDock>
    <DocTabs>
      <DocTab $active $w={117}><DocIcon s={15} />Design View</DocTab>
      <DocTab $w={138}><DocIcon s={15} fill="#fbf3d4" line="#c8a23c" />Master Pages<DocTabClose><TinyX /></DocTabClose></DocTab>
      <DocTab $w={126}><XmlIcon />XML Source<DocTabClose><TinyX /></DocTabClose></DocTab>
    </DocTabs>
    <CanvasFrame>
      <RulerCorner>
        <RulerSvg width="16" height="19">
          <path d="M2 4.500h12M8.500 4.500V19" stroke="#000" />
        </RulerSvg>
      </RulerCorner>
      <RulerTop><Ruler origin={16} length={652} labels={8} /></RulerTop>
      <Blank />
      <RulerSide><Ruler vertical origin={15} length={640} labels={8} /></RulerSide>
      <Desk>
        <Page>
          <PageMargin />
          <MarginTag><SubformIcon /></MarginTag>
          <FieldObject>
            <FieldCaption>Text Field</FieldCaption>
            <FieldWell />
          </FieldObject>
          {handles.map(([x, y], i) => <Handle key={i} $x={x} $y={y} />)}
          <WarnTag>
            <svg width="13" height="13" viewBox="0 0 13 13">
              <text x="6.500" y="6" fontSize="5.500" fontWeight="bold" textAnchor="middle" fill="#9a7a10" fontFamily="Liberation Sans">ABC</text>
              <path d="M9 6v6" stroke="#111" strokeWidth="2" />
            </svg>
          </WarnTag>
        </Page>
      </Desk>
      <ScrollTrack>
        <ScrollBtn><Chevron up /></ScrollBtn>
        <ScrollThumb $mt={14} $h={447}><ThumbGrip /></ScrollThumb>
        <ScrollFill />
        <ScrollBtn><Chevron /></ScrollBtn>
      </ScrollTrack>
    </CanvasFrame>
  </CenterDock>
);

const library: [string, string, string, string][] = [
  ["ok", "Button", "check", "Check Box"],
  ["circle", "Circle", "content", "Content Area"],
  ["clock", "Date Field", "clock", "Date/Time Field"],
  ["decimal", "Decimal Field", "signature", "Signature Field"],
  ["dropdown", "Drop-down List", "ok", "Email Submit Button"],
  ["flash", "Flash Field", "ok", "HTTP Submit Button"],
  ["image", "Image", "bolt", "Image Field"],
  ["line", "Line", "list", "List Box"],
  ["numeric", "Numeric Field", "barcode", "Paper Forms Barcode"],
  ["password", "Password Field", "ok", "Print Button"],
  ["radio", "Radio Button", "rect", "Rectangle"],
  ["ok", "Reset Button", "subform", "Subform"],
  ["table", "Table", "text", "Text"],
  ["textfield", "Text Field", "clock", "Time Field"],
];

const Check: React.FC<{ label: string; off?: boolean }> = ({ label, off }) => (
  <>
    <CheckBox $off={off} />
    <CheckText $off={off}>{label}</CheckText>
  </>
);

const RightPanel = () => (
  <RightDock>
    <Caption />
    <TabStrip>
      <DockTab $active $w={108}><TabLabel>Object Library</TabLabel><CloseBox><TinyX /></CloseBox></DockTab>
      <DockTab $w={116} $pl={15} $z={4}><TabLabel>Fragment Library</TabLabel></DockTab>
      <TabTail />
      <TabMenu><TabMenuIcon /></TabMenu>
    </TabStrip>
    <LibBody>
      <LibColumn>
        <LibList>
          <LibGrid>
            {library.map(([ia, a, ib, b]) => (
              <React.Fragment key={a}>
                <LibItem>{icons[ia]}{a}</LibItem>
                <LibItem>{icons[ib]}{b}</LibItem>
              </React.Fragment>
            ))}
          </LibGrid>
        </LibList>
        <LibFold>Custom</LibFold>
      </LibColumn>
      <ListScroll>
        <ScrollBtn><Chevron up /></ScrollBtn>
        <ScrollThumb $mt={20} $h={170}><ThumbGrip /></ScrollThumb>
        <ScrollFill />
        <ScrollBtn><Chevron /></ScrollBtn>
      </ListScroll>
    </LibBody>
    <DockRule />
    <Caption />
    <TabStrip $mt={1}>
      <DockTab $active $w={69}><TabLabel>Object</TabLabel><CloseBox><TinyX /></CloseBox></DockTab>
      <DockTab $w={83} $pl={8} $z={4}><TabLabel>Accessibility</TabLabel></DockTab>
      <TabTail />
      <TabMenu><TabMenuIcon /></TabMenu>
    </TabStrip>
    <SubTabs>
      <SubTab $active $w={43} $z={5}>Field</SubTab>
      <SubTab $w={44} $z={4}>Value</SubTab>
      <SubTab $w={56} $z={3}>Binding</SubTab>
    </SubTabs>
    <FormWrap>
      <FormRow $mt={5} $h={20}>
        <FormLabel $w={40}>Type:</FormLabel>
        <ComboBox $w={187} $h={20}>
          <ComboText>{icons.textfield}Text Field</ComboText>
          <ComboArrow><Chevron /></ComboArrow>
        </ComboBox>
      </FormRow>
      <FormRule $mt={5} />
      <FormRow $mt={6} $h={24}>
        <FormLabel $w={66} $lift={3}>Caption:</FormLabel>
        <TextBox $w={161} $h={24}>Text <Wavy>Field</Wavy></TextBox>
      </FormRow>
      <FormRow $mt={6} $h={20}>
        <FormLabel $w={66}>Appearance:</FormLabel>
        <ComboBox $w={161} $h={20}><ComboText>Sunken Box</ComboText><ComboArrow><Chevron /></ComboArrow></ComboBox>
      </FormRow>
      <FormRow $mt={8} $h={20} $pl={12}><Check label="Allow Multiple Lines" /></FormRow>
      <FormRow $mt={0} $h={20} $pl={12}>
        <FormLabel $w={97}><Check label="Limit Length" /></FormLabel>
        <FormLabel $w={62} $lift={1}>Max Chars:</FormLabel>
        <TextBox $w={44} $h={20} />
      </FormRow>
      <FormRow $mt={0} $h={19} $pl={12}><Check label="Limit Length to Visible Area" /></FormRow>
      <FormRow $mt={0} $h={19} $pl={12}><Check off label="Allow Page Breaks within Content" /></FormRow>
      <FormRow $mt={1} $h={19} $pl={12}><Check off label="Keep with Next" /></FormRow>
      <FormRow $mt={1} $h={20} $pl={12}>
        <FormLabel $w={81}><Check label="Comb of" /></FormLabel>
        <TextBox $w={44} $h={20} $off />
        <Slot $w={9} />
        <span>characters</span>
      </FormRow>
      <FormRow $mt={6} $h={20} $pl={12}>
        <FormLabel $w={81}>Field Format:</FormLabel>
        <ComboBox $w={134} $h={20}><ComboText>Plain Text Only</ComboText><ComboArrow><Chevron /></ComboArrow></ComboBox>
      </FormRow>
      <FormRow $mt={9} $h={21} $pl={10}>
        <SplitButton>
          <SplitLabel>Patterns...</SplitLabel>
          <SplitArrow><TinyDown /></SplitArrow>
        </SplitButton>
      </FormRow>
      <FormRule $mt={5} />
      <FormRow $mt={7} $h={13}>Presence:</FormRow>
      <FormRow $mt={3} $h={21}>
        <ComboBox $w={227}><ComboText>Visible</ComboText><ComboArrow><Chevron /></ComboArrow></ComboBox>
      </FormRow>
      <MoreBar>
        <svg width="9" height="8" viewBox="0 0 9 8">
          <path d="M1 0l3.500 3L8 0M1 4l3.500 3L8 4" fill="none" stroke="#111" strokeWidth="1.500" />
        </svg>
      </MoreBar>
    </FormWrap>
  </RightDock>
);

const Status = () => (
  <StatusBar>
    <StatusPane $w={564} $bare />
    <StatusPane $w={130} $bare>
      <Svg><path d="M3 1v13h12M3 5h-2M3 9h-2M3 13h-2" stroke="#334" fill="none" /><path d="M6 3l2 3v4M10 3L8 6M11 4l3 6M14 4l-3 6" stroke="#5540a0" fill="none" /></Svg>
      0.5in , 0.5in
    </StatusPane>
    <StatusPane $w={121} $gap={1}>
      <Svg s={15}><rect x="2.500" y="2.500" width="11" height="11" fill="#dfe9f5" stroke="#2c6ea8" /><rect x="11" y="1" width="3" height="3" fill="#2c6ea8" /><rect x="1" y="12" width="3" height="3" fill="#2c6ea8" /></Svg>
      2.441in x 0.354in
    </StatusPane>
    <StatusPane $w={138} $gap={3}>
      <Slot $w={0} />{icons.textfield}TextField1
    </StatusPane>
    <StatusPane $w={64} $gap={0}><DocIcon fill="#fbf3d4" line="#c8a23c" />1/1</StatusPane>
    <StatusPane $w={145} $gap={5}>
      <Slot $w={0} />
      <Svg><text x="8" y="9" fontSize="8" fontWeight="bold" textAnchor="middle" fill="#5a8ac0" fontFamily="Liberation Sans">ABC</text><path d="M8 7l5 5-2 0 1 3-2 0-1-3-1 2z" fill="#222" /></Svg>
      <Svg s={14}><FieldFrame /><path d="M2.500 5.500h3M4 5.500v6M2.500 11.500h3" stroke="#333" fill="none" /></Svg>
      <Svg s={14}><rect x=".5" y="1.500" width="13" height="11" fill="#eef4fb" stroke="#2c6ea8" /><rect x="6" y="3" width="4" height="4" fill="#c83030" /><rect x="3" y="7" width="4" height="4" fill="#2c6ea8" /><rect x="8" y="7" width="4" height="4" fill="#2e9a2e" /></Svg>
      {icons.text}
    </StatusPane>
    <StatusPane $w={58}>NUM</StatusPane>
    <StatusPane $w={59} />
  </StatusBar>
);

type MenuEntry = { t: string; key?: string; hot?: boolean; off?: boolean } | "-";

const menuItems: MenuEntry[] = [
  { t: "Action Builder..." },
  "-",
  { t: "Check Spelling...", key: "F7" },
  { t: "Edit Dictionary..." },
  "-",
  { t: "Check Script Syntax" },
  "-",
  { t: "Macros", hot: true },
  "-",
  { t: "Template Manager..." },
  "-",
  { t: "Keyboard Shortcuts..." },
  { t: "Customize..." },
  "-",
  { t: "Options..." },
  { t: "Missing Fonts", off: true },
];

const App: React.FC = () => (
  <Window>
    <GlobalStyle />
    <TitleBar>
      <Svg><rect x=".5" y=".5" width="15" height="15" fill="#0a2a80" stroke="#d0dcf0" /><path d="M3 5h10v6H3M8 2v12" fill="none" stroke="#fff" /></Svg>
      <TitleText>ADEP Document Services - Designer - [Untitled1]</TitleText>
      <WinButton>
        <svg width="9" height="9"><rect x="1" y="6" width="7" height="3" fill="#fff" /></svg>
      </WinButton>
      <WinButton>
        <svg width="13" height="13" viewBox="0 0 13 13"><path d="M4.500 3.500v-2h7v6h-2M1.500 4.500h8v7h-8z" fill="none" stroke="#fff" strokeWidth="1.300" /></svg>
      </WinButton>
      <WinButton $close>
        <svg width="13" height="13" viewBox="0 0 13 13"><path d="M1.500 1.500l10 10M11.500 1.500l-10 10" stroke="#fff" strokeWidth="2" /></svg>
      </WinButton>
    </TitleBar>
    <MenuBar>
      <MenuLogo><Svg><path d="M2.500 1.500h11v13h-11z" fill="#fff" stroke="#b8b5a6" /><rect x="2" y="1" width="9" height="3" fill="#18406e" /><path d="M5 8h7v4H5M8.500 6v8" fill="none" stroke="#2c5a90" /></Svg></MenuLogo>
      <MenuItem $w={29}>File</MenuItem>
      <MenuItem $w={30}>Edit</MenuItem>
      <MenuItem $w={33}>View</MenuItem>
      <MenuItem $w={42}>Insert</MenuItem>
      <MenuItem $w={38}>Table</MenuItem>
      <MenuItem $w={45}>Layout</MenuItem>
      <MenuItem $w={37} $open>Tools</MenuItem>
      <MenuItem $w={50}>Window</MenuItem>
      <MenuItem $w={33}>Help</MenuItem>
      <MdiControls>
        <MdiButton><svg width="8" height="8"><rect x="1" y="5" width="6" height="2" fill="#666" /></svg></MdiButton>
        <MdiButton><svg width="11" height="11" viewBox="0 0 11 11"><path d="M3.500 2.500v-2h7v5h-2M.5 3.500h7v6h-7z" fill="none" stroke="#555" /></svg></MdiButton>
        <MdiButton><svg width="9" height="9" viewBox="0 0 9 9"><path d="M1 1l7 7M8 1L1 8" stroke="#555" strokeWidth="1.800" /></svg></MdiButton>
      </MdiControls>
    </MenuBar>
    <ToolArea>
      <ToolbarOne />
      <ToolbarTwo />
    </ToolArea>
    <Script />
    <HSplit $h={7} />
    <Workspace>
      <LeftPanel />
      <Center />
      <RightPanel />
    </Workspace>
    <HSplit $h={11} $edge />
    <Status />

    <Popup $l={237} $t={46} $w={167} $pt={2}>
      {menuItems.map((m, i) =>
        m === "-" ? (
          <PopSep key={i} />
        ) : (
          <PopItem key={i} $hot={m.hot} $off={m.off} $indent={16}>
            {m.t}
            {m.key && <PopKey>{m.key}</PopKey>}
            {m.hot && <PopArrow />}
          </PopItem>
        )
      )}
    </Popup>
    <Popup $l={399} $t={141} $w={209} $pt={2}>
      <PopItem $indent={17}>Update for Interactive Statements</PopItem>
      <PopItem $indent={17}>LCB Field Designer</PopItem>
    </Popup>
    <DockHandle $l={600} $t={276}><HandleMark /></DockHandle>
    <DockHandle $l={600} $t={965}><HandleMark /></DockHandle>
    <SideHandle $l={275}><SideMark /></SideHandle>
    <SideHandle $l={972}><SideMark /></SideHandle>
  </Window>
);

export default App;
